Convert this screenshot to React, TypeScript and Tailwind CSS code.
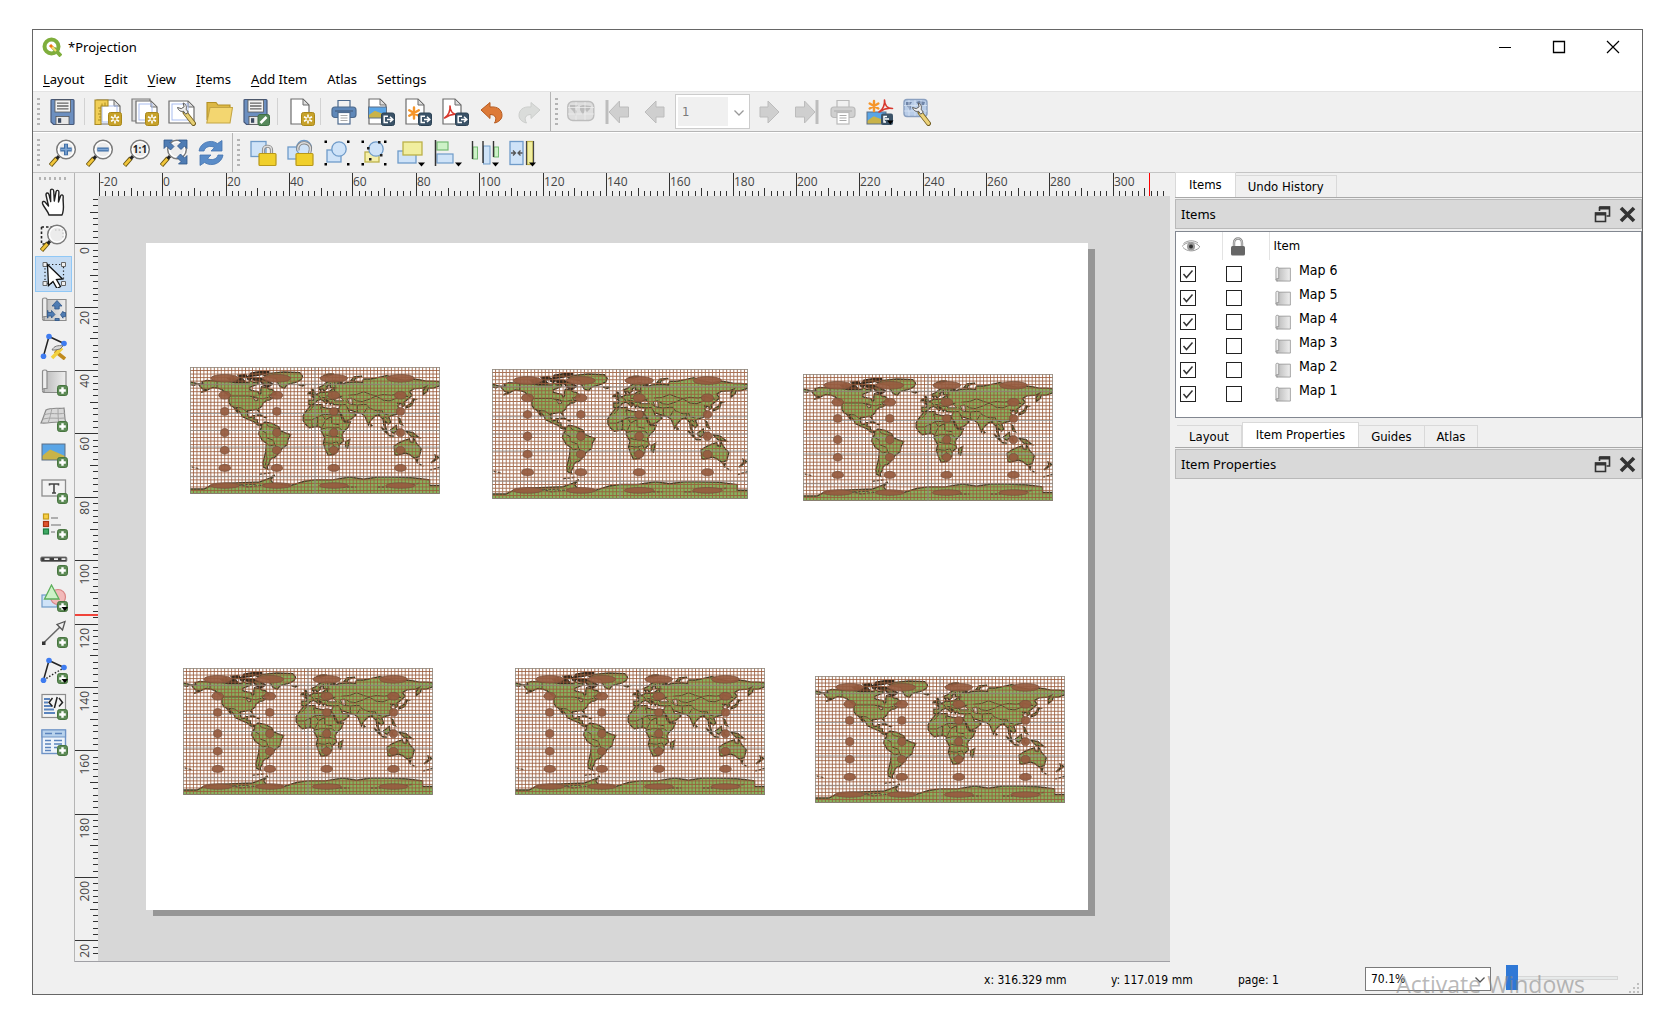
import type { ReactNode } from "react";

/* ---------- shared icon parts ---------- */

function Icon({ children }: { children: ReactNode }) {
  return (
    <svg viewBox="0 0 28 28" className="size-7" fill="none" aria-hidden="true">
      {children}
    </svg>
  );
}

const Page = ({ x = 5, y = 1, w = 18, h = 24 }: { x?: number; y?: number; w?: number; h?: number }) => (
  <>
    <path d={`M${x} ${y}h${w - 6}l6 6v${h - 6}h${-w}z`} fill="#fff" stroke="#6d6d6d" strokeWidth="1.2" />
    <path d={`M${x + w - 6} ${y}v6h6z`} fill="#dcdcdc" stroke="#6d6d6d" strokeWidth="1" />
  </>
);

const GoldBadge = () => (
  <>
    <rect x="14.5" y="14.5" width="13" height="13" rx="2" fill="#c7a22b" stroke="#a98718" />
    <path d="M21 16.5v9M17 18.8l8 4.5M17 23.3l8-4.5" stroke="#fff" strokeWidth="1.6" />
    <circle cx="21" cy="21" r="1.5" fill="#c7a22b" />
  </>
);

const ExportBadge = () => (
  <>
    <rect x="14.5" y="15" width="13" height="12.5" rx="2" fill="#3b5368" stroke="#2c4255" />
    <path d="M21 18.2h-3.8v6.4H21M20 21.4h5.4M23 18.8l2.8 2.6-2.8 2.6" stroke="#fff" strokeWidth="1.5" />
  </>
);

const PlusBadge = ({ menu = false }: { menu?: boolean }) => (
  <>
    <rect x="17.5" y="17.5" width="10" height="10" rx="2.2" fill="#5d8b56" stroke="#47743f" />
    <path d="M22.5 19.2v6.6M19.2 22.5h6.6" stroke="#fff" strokeWidth="2.4" />
    {menu && <path d="M21.5 23h6.5l-3.2 4z" fill="#000" />}
  </>
);

const DropMark = () => <path d="M21 23.5h7l-3.5 4z" fill="#000" />;

const Lens = ({ children }: { children?: ReactNode }) => (
  <>
    <path d="M1.5 26.5 8 19" stroke="#6b5712" strokeWidth="4.4" />
    <path d="M1.8 26 8 19.2" stroke="#f2c63a" strokeWidth="2.6" />
    <path d="m7.5 19.8 2.6-2.8" stroke="#222" strokeWidth="3.2" />
    <circle cx="17" cy="10.5" r="9.3" fill="#ececec" stroke="#7a7a7a" strokeWidth="1.5" />
    <circle cx="17" cy="10.5" r="7.6" stroke="#fff" strokeWidth="1.4" />
    {children}
  </>
);

const Floppy = () => (
  <>
    <path d="M3 1.5h21a1 1 0 0 1 1 1v23a1 1 0 0 1-1 1H4.5L2 24V2.5a1 1 0 0 1 1-1z" fill="#6c8fc0" stroke="#47597a" strokeWidth="1.2" />
    <rect x="6" y="2" width="15.5" height="12" fill="#f3f3f3" stroke="#555" strokeWidth=".8" />
    <path d="M8 5.2h11.5M8 8h11.5M8 10.8h11.5" stroke="#666" strokeWidth="1.3" />
    <rect x="7" y="18.5" width="13" height="8" fill="#e8e8e8" stroke="#555" strokeWidth=".8" />
    <rect x="9" y="20.2" width="3.2" height="4.6" fill="#3c4a60" />
  </>
);

const Wrench = ({ handle }: { handle: string }) => (
  <>
    <path d="m17 14.5 8.5 11" stroke="#6f5a1c" strokeWidth="4.8" strokeLinecap="round" />
    <path d="m17.300 15 8 10.3" stroke={handle} strokeWidth="3.4" strokeLinecap="round" />
    <path d="M9.500 9.500c1 3.500 4 4.500 6 3.700l2.200 3 2.600-2-2.200-3c1-2.600-.2-5.200-3-6.200l1 3.800-2.800 1.800z" fill="#eee" stroke="#5a5a5a" />
  </>
);

const Printer = ({ body, dark }: { body: string; dark: string }) => (
  <>
    <path d="M8 9V2.5h12V9" fill="#f1f1f1" stroke={dark} strokeWidth="1.2" />
    <rect x="2" y="9" width="24" height="10.5" rx="3" fill={body} stroke={dark} strokeWidth="1.2" />
    <path d="M5 13h18" stroke={dark} strokeWidth="1.6" />
    <rect x="8" y="14.5" width="12" height="11.5" fill="#fff" stroke={dark} strokeWidth="1.2" />
    <path d="M10.5 17.5h7M10.5 20h7M10.5 22.5h7" stroke="#aaa" strokeWidth="1.2" />
  </>
);

const Scroll = () => (
  <>
    <path d="M4 3.5h22v21H4z" fill="url(#paper)" stroke="#8c8c8c" strokeWidth="1.2" />
    <path d="M2.5 3.500c0-2 4.500-2 4.500 0V20.500H4.500c-1.5 0-2 1-2 2z" fill="#ededed" stroke="#8c8c8c" strokeWidth="1.2" />
    <path d="M2.5 22.5c0 2 1.5 2 2.5 2" stroke="#8c8c8c" strokeWidth="1.2" />
  </>
);

const Photo = ({ x, y, w, h }: { x: number; y: number; w: number; h: number }) => (
  <>
    <rect x={x} y={y} width={w} height={h} fill="#5aa5e6" />
    <path d={`M${x} ${y + h * 0.75} ${x + w * 0.35} ${y + h * 0.35}l${w * 0.65} ${h * 0.4}v${h * 0.25}H${x}z`} fill="#c9b349" />
    <rect x={x} y={y} width={w} height={h} stroke="#5b6f85" strokeWidth="1" />
  </>
);

const Asterisk = ({ x, y, s }: { x: number; y: number; s: number }) => (
  <path
    d={`M${x} ${y - s}v${s * 2}M${x - s * 0.87} ${y - s * 0.5}l${s * 1.74} ${s}M${x - s * 0.87} ${y + s * 0.5}l${s * 1.74} ${-s}`}
    stroke="#f5952a"
    strokeWidth="2.4"
    strokeLinecap="round"
  />
);

const Pdf = ({ x, y }: { x: number; y: number }) => (
  <path
    d={`M${x} ${y + 12}c4-2 6-8 5.5-12 0 5 3 8.500 8 8.500-5-1-10 1-13.500 3.500z`}
    stroke="#d8382e"
    strokeWidth="1.6"
    strokeLinejoin="round"
  />
);

const WorldTile = () => (
  <>
    <rect x="0.8" y="3.5" width="26" height="19" rx="5" fill="#dedede" stroke="#bdbdbd" strokeWidth="1.4" />
    <path d="M3 7h8l-3 4 2 2-1 5-3-5-3-3zM13 8l3-1 8 1-1 3-3 3-2-2-2 5-3-5z" fill="#bcbcbc" />
    <path d="M1 9.5h26M1 16h26M9 4v18M18 4v18" stroke="#ededed" strokeWidth=".8" />
  </>
);

const Nodes = ({ dashed }: { dashed: boolean }) => (
  <>
    <path d="M9 4.5 3.5 24M9 4.5l15 7" stroke="#222" strokeWidth="1.5" />
    {dashed && <path d="m3.5 24 20-12" stroke="#222" strokeWidth="1.4" strokeDasharray="1.5 1.8" />}
    <circle cx="9" cy="4.5" r="2.8" fill="#3f7cf0" />
    <circle cx="24" cy="11.5" r="2.8" fill="#3f7cf0" />
    <circle cx="3.5" cy="24.2" r="2.8" fill="#3f7cf0" />
  </>
);

const corners = (a: number, b: number) =>
  [
    [a, a],
    [b, a],
    [a, b],
    [b, b],
  ].map(([x, y]) => <rect key={`${x}-${y}`} x={x} y={y} width="2.5" height="2.5" fill="#000" />);

const Padlock = ({ open = false }: { open?: boolean }) => {
  const shackle = open ? "M12 11.500C11 6.500 14.500 3.500 18.500 3.800c4 .3 6.500 3 5.800 7l-.8 4" : "M14.500 15v-4c0-5 8-5 8 0v4";
  return (
    <>
      <path d={shackle} stroke="#858585" strokeWidth="3.2" />
      <path d={shackle} stroke="#dcdcdc" strokeWidth="1.4" />
      <rect x="10" y="14.5" width="17" height="12" rx="1" fill="#f0cf2b" stroke="#b8981a" strokeWidth="1.2" />
    </>
  );
};

const skyFill = "#cfe3f8";
const skyLine = "#6f9bc9";

/* ---------- toolbar icons ---------- */

const icons: Record<string, ReactNode> = {
  save: <Floppy />,
  newLayout: (
    <>
      <Page x={3} y={2} w={23} h={24} />
      <rect x="8" y="8" width="15" height="16" stroke="#a9bdf0" />
      <path d="M1 2h13v6H7v18.500H1z" fill="#f1cf57" stroke="#a98a20" strokeWidth="1.1" />
      <path d="M4 10h3M5 13h2M4 16h3M5 19h2M4 22h3M8 5.5v2.500M11 4.500V8" stroke="#a98a20" />
      <GoldBadge />
    </>
  ),
  duplicate: (
    <>
      <path d="M1 1h18v22H1z" fill="#dedede" stroke="#7b7b7b" strokeWidth="1.2" />
      <Page x={5} y={3} w={21} h={22} />
      <rect x="8" y="6" width="13" height="16" stroke="#a9bdf0" />
      <GoldBadge />
    </>
  ),
  manager: (
    <>
      <Page x={1} y={3} w={25} h={22} />
      <rect x="4" y="6" width="16" height="16" stroke="#a9bdf0" />
      <Wrench handle="#e6cf74" />
    </>
  ),
  open: (
    <>
      <path d="M2 4.500h9l2 2.500h12v4H6L2 22z" fill="#dcb845" stroke="#b39024" strokeWidth="1.1" />
      <path d="M5 9.500H27.500L25 25H1.800z" fill="#f3d670" stroke="#c4a545" strokeWidth="1.1" />
    </>
  ),
  saveAs: (
    <>
      <Floppy />
      <rect x="16" y="16.5" width="11.5" height="11" rx="2" fill="#56895b" stroke="#3f6f45" />
      <path d="m18.500 25 6-6" stroke="#fff" strokeWidth="2.6" />
    </>
  ),
  addPages: (
    <>
      <Page x={4} y={1} w={18} h={25} />
      <GoldBadge />
    </>
  ),
  print: <Printer body="#5f88b9" dark="#4d6a8e" />,
  printGray: <Printer body="#d0d0d0" dark="#bababa" />,
  exportImage: (
    <>
      <Page x={2} y={1} w={17} h={25} />
      <Photo x={1.5} y={9} w={18} h={11} />
      <ExportBadge />
    </>
  ),
  exportSvg: (
    <>
      <Page x={2} y={1} w={18} h={25} />
      <Asterisk x={10} y={15} s={5.5} />
      <ExportBadge />
    </>
  ),
  exportPdf: (
    <>
      <Page x={2} y={1} w={18} h={25} />
      <Pdf x={3.5} y={8} />
      <ExportBadge />
    </>
  ),
  undo: (
    <path d="M3 12 12 4.500v4.500c8-.8 12 3 12 8.500 0 3.500-3 6.500-7.500 7.500 2.500-4 1.500-8.500-4.500-8.500v4z" fill="#dd7a38" stroke="#b55a1f" />
  ),
  redo: (
    <path d="M25 12 16 4.500v4.500C8 8.200 4 12 4 17.500 4 21 7 24 11.500 25 9 21 10 16.500 16 16.500v4z" fill="#dadcda" stroke="#cccecc" />
  ),
  preview: <WorldTile />,
  first: (
    <>
      <rect x="1.5" y="2" width="3" height="24" fill="#bdbdbd" />
      <path d="M5 14 15.500 3v6H24.500v10h-9v6z" fill="#cfcfcf" stroke="#bcbcbc" />
    </>
  ),
  prev: <path d="M4 14 15 3v6h8v10h-8v6z" fill="#cfcfcf" stroke="#bcbcbc" />,
  next: <path d="M24 14 13 3v6H5v10h8v6z" fill="#cfcfcf" stroke="#bcbcbc" />,
  last: (
    <>
      <rect x="23.5" y="2" width="3" height="24" fill="#bdbdbd" />
      <path d="M23 14 12.500 3v6H3.500v10h9v6z" fill="#cfcfcf" stroke="#bcbcbc" />
    </>
  ),
  exportAtlas: (
    <>
      <Photo x={1} y={14} w={19} h={12} />
      <Asterisk x={8} y={8} s={5} />
      <Pdf x={13} y={2} />
      <rect x="15" y="15.5" width="12" height="11.5" rx="2" fill="#3b5368" />
      <path d="M21 18.500h-3v5.500h2M19 21h4" stroke="#fff" strokeWidth="1.5" />
      <path d="M21 22.500h6.500l-3.200 4z" fill="#000" />
    </>
  ),
  atlasSettings: (
    <>
      <rect x="1" y="1.5" width="23" height="17" rx="3" fill="#b9cde8" stroke="#8aa0c0" strokeWidth="1.4" />
      <path d="M3 4h6l-2 3 1 2-1 4-2-4-2-2zM13 4l3-1 6 1-1 3-3 2z" fill="#6f85a8" />
      <path d="M1 7.500h23M1 13h23M6 2v16M12 2v16M18 2v16" stroke="#dde8f6" strokeWidth=".7" />
      <Wrench handle="#ecd27a" />
    </>
  ),
  zoomIn: (
    <Lens>
      <path d="M17 4.800v11.400M11.300 10.500h11.400" stroke="#3f6ea6" strokeWidth="4" />
      <path d="M17 5.500v10M12 10.500h10" stroke="#7ea6d4" strokeWidth="1.6" />
    </Lens>
  ),
  zoomOut: (
    <Lens>
      <path d="M11.300 10.500h11.400" stroke="#3f6ea6" strokeWidth="4" />
      <path d="M12 10.500h10" stroke="#7ea6d4" strokeWidth="1.6" />
    </Lens>
  ),
  zoomActual: (
    <Lens>
      <text x="17" y="14" textAnchor="middle" fontSize="10" fontWeight="700" fill="#222" className="font-['Open_Sans',sans-serif]">
        1:1
      </text>
    </Lens>
  ),
  zoomFull: (
    <>
      <Lens />
      <path d="M4 1h8.500L10 3.500l4 4L10.500 11l-4-4L4 9.500zM27 1h-8.500L21 3.500l-3.500 3.500 3.500 3.500 3.500-3.500L27 9.500zM27 25v-8.500L24.500 19l-4-4-3.500 3.500 4 4-2.500 2.500z" fill="#4f7cb3" stroke="#2f5688" strokeWidth=".8" />
    </>
  ),
  refresh: (
    <>
      <path d="M2 12C3 4 13-.5 20.500 4.500L25 1.500V12H14l3.500-3.500C13 6 8 8 7 12z" fill="#5a8cc8" stroke="#4474b0" strokeWidth=".8" />
      <path d="M26 16c-1 8-11 12.500-18.500 7.500L3 26.500V16h11l-3.500 3.500C15 22 20 20 21 16z" fill="#5a8cc8" stroke="#4474b0" strokeWidth=".8" />
    </>
  ),
  lock: (
    <>
      <rect x="2" y="2.5" width="15" height="15" fill={skyFill} stroke={skyLine} strokeWidth="1.3" />
      <Padlock />
    </>
  ),
  unlock: (
    <>
      <rect x="2" y="8" width="14" height="12" fill={skyFill} stroke={skyLine} strokeWidth="1.3" />
      <circle cx="18" cy="9" r="7.5" fill={skyFill} stroke={skyLine} strokeWidth="1.3" />
      <Padlock open />
    </>
  ),
  group: (
    <>
      <rect x="4" y="11" width="14" height="12" fill={skyFill} stroke={skyLine} strokeWidth="1.3" />
      <circle cx="16" cy="10" r="7.2" fill={skyFill} stroke={skyLine} strokeWidth="1.3" />
      {corners(1.5, 24)}
    </>
  ),
  ungroup: (
    <>
      <rect x="5" y="13" width="14" height="10" fill="#f5efaa" stroke="#bcb149" strokeWidth="1.3" />
      <circle cx="16" cy="10" r="7.2" fill={skyFill} stroke={skyLine} strokeWidth="1.3" />
      {corners(1.5, 24)}
      <path d="M7 8h2.500v2.500H7zM20 15h2.500v2.500H20zM9 19h2.500v2.500H9zM18 2h2.500v2.500H18z" fill="#222" />
    </>
  ),
  raise: (
    <>
      <rect x="1" y="12" width="18" height="12" fill={skyFill} stroke={skyLine} strokeWidth="1.3" />
      <rect x="6" y="3" width="19" height="13" fill="#f1ee9f" stroke="#bcb149" strokeWidth="1.3" />
      <DropMark />
    </>
  ),
  align: (
    <>
      <rect x="3" y="3" width="11" height="8" fill="#cdf2c7" stroke="#74b972" strokeWidth="1.2" />
      <rect x="3" y="15" width="16" height="9" fill={skyFill} stroke={skyLine} strokeWidth="1.2" />
      <path d="M1.500 1v26" stroke="#333" strokeWidth="1.5" />
      <DropMark />
    </>
  ),
  distribute: (
    <>
      <rect x="2" y="8" width="4.5" height="12" fill="#cdf2c7" stroke="#74b972" />
      <rect x="12.5" y="7" width="6.5" height="18" fill={skyFill} stroke={skyLine} />
      <rect x="23" y="8" width="4.5" height="10" fill="#cdf2c7" stroke="#74b972" />
      <path d="M1.500 2v18M12 2v22M22.500 2v16" stroke="#333" strokeWidth="1.4" />
      <DropMark />
    </>
  ),
  resize: (
    <>
      <rect x="2" y="2.5" width="13" height="23" fill={skyFill} stroke={skyLine} strokeWidth="1.3" />
      <rect x="19" y="2.5" width="6" height="23" fill="#f1ee9f" stroke="#bcb149" strokeWidth="1.2" />
      <path d="M3 14h4M5 11.500 7.500 14 5 16.500M14.500 14h-4M12.500 11.500 10 14l2.500 2.500" stroke="#555" strokeWidth="1.3" />
      <path d="M18.500 2v24M25.500 2v24" stroke="#444" strokeWidth="1.2" />
      <DropMark />
    </>
  ),
  pan: (
    <path
      d="M9 27C8 23 3.500 19 2.500 15.500c-.5-2 1.500-3 3-1l3 3.500L6 7c-.4-2.500 2.400-2.800 3-.3l1.700 6.800L10.500 3c0-2.500 3-2.500 3.200 0l.6 10L16 4c.4-2.300 3-2 2.900.3L18.500 14l2-6c.7-1.900 2.900-1.300 2.700.8C22.500 15 25 20 22 27z"
      fill="#fff"
      stroke="#222"
      strokeWidth="1.4"
      strokeLinejoin="round"
    />
  ),
  zoomTool: (
    <>
      <path d="M1.500 3h14M1.500 3v17h8" stroke="#222" strokeWidth="1.6" strokeDasharray="2.500 2" />
      <Lens>
        <path d="M15 6h8v9" stroke="#bbb" strokeDasharray="1.500 2" />
      </Lens>
    </>
  ),
  select: (
    <>
      <path d="M5 4.500h18.500v19H5z" stroke="#222" strokeWidth="1.2" strokeDasharray="1.300 2.200" />
      <path d="M3 2.500h4v4H3zM21.500 2.500h4v4h-4zM3 21.500h4v4H3zM21.500 21.500h4v4h-4z" fill="#eee" stroke="#666" />
      <path d="m7.500 4.500 15 14.500-6 .5 4 7-3.500 2-4-7-4.500 4z" fill="#fff" stroke="#111" strokeWidth="1.3" />
    </>
  ),
  moveContent: (
    <>
      <Scroll />
      <g fill="#4f7cb3" stroke="#2f5688" strokeWidth=".8">
        <path d="M17 4.500 22 10h-2.800v3h-4.400v-3H12z" />
        <path d="M8 14.500v2h3.500v-2l3.500 4-3.500 3.500v-2H8v2h-.5v-7.500z" />
        <path d="M15 22.500h4.200v2H15zM25.500 16.500v4.200h-2.500v1.500l-2.500-3.500 2.500-3.500v1.300z" />
      </g>
    </>
  ),
  editNodes: (
    <>
      <Nodes dashed={false} />
      <path d="m15 19 10 8" stroke="#c08a1e" strokeWidth="3.6" />
      <path d="m22 16-10 10" stroke="#f2d13f" strokeWidth="3.6" />
      <path d="M12 18c2-4 6-5 11-4l-3 3-5 1z" fill="#d8d8d8" stroke="#777" />
    </>
  ),
  addMap: (
    <>
      <Scroll />
      <PlusBadge />
    </>
  ),
  add3d: (
    <>
      <path d="M6 6c5-3 14-1 18-2 1 5 0 10 2 15-8-3-17 1-25 0C3 15 4 11 6 6z" fill="#d8d8d8" stroke="#8a8a8a" strokeWidth="1.2" />
      <path d="M4 11c7-3 14 0 21-2M3 15c7-2 15 0 22-1M12 4c-1 5-2 10-4 15M18 4c0 5 0 9 .5 14" stroke="#a5a5a5" />
      <PlusBadge />
    </>
  ),
  addImage: (
    <>
      <Photo x={2} y={4} w={23} h={16} />
      <PlusBadge />
    </>
  ),
  addLabel: (
    <>
      <rect x="2" y="4" width="23.5" height="16" fill="#f2f2f2" stroke="#8c8c8c" strokeWidth="1.3" />
      <path d="M9.500 9.500V8h9v1.500M14 8v9M12 17h4" stroke="#444" strokeWidth="1.6" />
      <PlusBadge />
    </>
  ),
  addLegend: (
    <>
      <rect x="3.5" y="2" width="5" height="5" fill="#f7cf46" stroke="#c59c19" strokeWidth="1.2" />
      <rect x="3.5" y="9.5" width="5" height="5" fill="#e0542f" stroke="#a93210" strokeWidth="1.2" />
      <rect x="3.5" y="17" width="5" height="5" fill="#3faa64" stroke="#1f7a40" strokeWidth="1.2" />
      <path d="M11 6h7M11 13h10M11 20h4" stroke="#999" strokeWidth="1.6" />
      <PlusBadge />
    </>
  ),
  addScale: (
    <>
      <rect x=".8" y="9" width="26" height="4.5" rx="1" fill="#3e3e3e" stroke="#777" />
      <path d="M4.500 11.200h5M14 11.200h4M21.500 11.200h4" stroke="#eee" strokeWidth="1.7" />
      <PlusBadge />
    </>
  ),
  addShape: (
    <>
      <rect x="2" y="11" width="15" height="12" fill={skyFill} stroke={skyLine} strokeWidth="1.2" />
      <circle cx="18" cy="13" r="7.5" fill="#f2b9b9" stroke="#d98484" strokeWidth="1.2" />
      <path d="M11.500 1 19 15H4.500z" fill="#cdf2c7" stroke="#5cae5b" strokeWidth="1.3" />
      <PlusBadge menu />
    </>
  ),
  addArrow: (
    <>
      <path d="M3.500 23 20 7" stroke="#666" strokeWidth="1.5" />
      <path d="m25 1.500-2.500 8.500-5.500-5.500z" fill="#eee" stroke="#555" strokeWidth="1.3" />
      <path d="M2 21.500h3.500V25H2z" fill="#333" />
      <PlusBadge />
    </>
  ),
  addNode: (
    <>
      <Nodes dashed />
      <PlusBadge menu />
    </>
  ),
  addHtml: (
    <>
      <rect x="2" y="2.5" width="23.5" height="23" fill="#f4f4f4" stroke="#8c8c8c" strokeWidth="1.2" />
      <path d="M4 7h6M4 10.500h4M4 14h8M4 17.500h10M4 21h11" stroke="#5b84bd" strokeWidth="1.9" />
      <path d="m12.500 6-3.500 4.500 3.500 4M19 6l3.500 4.500-3.500 4M17.200 5l-2.800 11" stroke="#222" strokeWidth="1.5" />
      <PlusBadge />
    </>
  ),
  addTable: (
    <>
      <rect x="2" y="2" width="23.5" height="23.5" fill="#eef4fb" stroke="#6e93c6" strokeWidth="1.4" />
      <path d="M2 2h23.500v7H2z" fill="#b8d2ec" stroke="#6e93c6" strokeWidth="1.2" />
      <path d="M5 5.500h7M15 5.500h7M5 12.500h6M14 12.500h8M5 16h6M14 16h8M5 19.500h6M14 19.500h3M5 22.500h6" stroke="#5b84bd" strokeWidth="1.4" />
      <PlusBadge />
    </>
  ),
};

/* ---------- toolbars ---------- */

function ToolButton({ name, label, disabled = false }: { name: string; label: string; disabled?: boolean }) {
  return (
    <button type="button" aria-label={label} disabled={disabled} className="flex w-[37px] shrink-0 items-center justify-center self-stretch">
      <Icon>{icons[name]}</Icon>
    </button>
  );
}

const Grip = () => (
  <span className="flex w-[11px] shrink-0 justify-center self-stretch py-1.5">
    <span className="w-[3px] bg-[repeating-linear-gradient(to_bottom,#b4b4b4_0_2px,transparent_2px_5px)]" />
  </span>
);

const Separator = () => <span className="my-1.5 mr-1 ml-[3px] w-px shrink-0 self-stretch bg-[#d2d2d2]" />;

const BarEnd = () => <span className="ml-[3px] w-px shrink-0 self-stretch bg-[#b5b5b5]" />;

const Tools = ({ list, disabled = false }: { list: [string, string][]; disabled?: boolean }) => (
  <>
    {list.map(([name, label]) => (
      <ToolButton key={name} name={name} label={label} disabled={disabled} />
    ))}
  </>
);

const Chevron = ({ className }: { className: string }) => (
  <svg viewBox="0 0 12 8" className={className} fill="none" aria-hidden="true">
    <path d="m1.500 1.500 4.500 4.500 4.500-4.500" stroke="currentColor" strokeWidth="1.3" />
  </svg>
);

const sideTools: [string, string][] = [
  ["pan", "Pan Layout"],
  ["zoomTool", "Zoom"],
  ["select", "Select/Move Item"],
  ["moveContent", "Move Item Content"],
  ["editNodes", "Edit Nodes Item"],
  ["addMap", "Add Map"],
  ["add3d", "Add 3D Map"],
  ["addImage", "Add Picture"],
  ["addLabel", "Add Label"],
  ["addLegend", "Add Legend"],
  ["addScale", "Add Scale Bar"],
  ["addShape", "Add Shape"],
  ["addArrow", "Add Arrow"],
  ["addNode", "Add Node Item"],
  ["addHtml", "Add HTML"],
  ["addTable", "Add Attribute Table"],
];

/* ---------- rulers ---------- */

const MM = 3.168;
const tickLength = (u: number, full: number) => (u % 20 === 0 ? full : u % 10 === 0 ? 8 : 5);
const range = (from: number, to: number) => Array.from({ length: (to - from) / 2 + 1 }, (_, i) => from + i * 2);

function HorizontalRuler() {
  return (
    <svg className="h-[23px] min-w-0 flex-1 font-['Open_Sans',sans-serif]" shapeRendering="crispEdges" aria-label="Horizontal ruler">
      {range(-20, 316).map((u) => {
        const x = Math.round(64.4 + u * MM);
        const len = tickLength(u, 23);
        return (
          <g key={u}>
            <rect x={x} y={23 - len} width="1" height={len} fill="#333" />
            {u % 20 === 0 && (
              <text x={x + 1} y="13" fontSize="12" fill="#444">
                {u}
              </text>
            )}
          </g>
        );
      })}
      <rect x="1051" y="0" width="1" height="23" fill="#f00" />
    </svg>
  );
}

function VerticalRuler() {
  return (
    <svg className="w-[23px] shrink-0 font-['Open_Sans',sans-serif]" shapeRendering="crispEdges" aria-label="Vertical ruler">
      {range(-14, 224).map((u) => {
        const y = Math.round(47.4 + u * MM);
        const len = tickLength(u, 23);
        return (
          <g key={u}>
            <rect x={23 - len} y={y} width={len} height="1" fill="#333" />
            {u % 20 === 0 && (
              <text transform={`translate(14 ${y + 4}) rotate(-90)`} textAnchor="end" fontSize="12" fill="#444">
                {u > 200 ? u - 200 : u}
              </text>
            )}
          </g>
        );
      })}
      <rect x="0" y="418" width="23" height="2" fill="#f0433a" />
    </svg>
  );
}

/* ---------- world map with Tissot indicatrices ---------- */

const land: string[] = [
  "-168 66 -161 66 -163 69 -156 71 -141 70 -128 70 -115 68 -108 68 -95 68 -94 71 -88 68 -82 69 -82 66 -87 64 -94 61 -94 58 -88 56 -82 55 -80 51 -78 53 -78 58 -77 62 -70 61 -65 58 -62 58 -56 53 -57 51 -66 50 -64 46 -61 46 -66 43 -70 43 -71 41 -75 39 -76 35 -81 31 -80 26 -82 28 -84 30 -90 29 -97 28 -97 22 -95 18 -91 19 -90 21 -87 21 -88 16 -83 15 -83 11 -79 9 -77 8 -79 7 -83 8 -87 12 -92 14 -97 16 -105 20 -106 23 -109 27 -113 31 -114 31 -110 24 -112 26 -117 33 -121 35 -124 40 -124 47 -123 49 -130 54 -134 58 -140 60 -147 61 -152 59 -158 56 -164 54 -158 58 -162 59 -165 62",
  "-73 78 -65 81 -45 83 -22 82 -18 77 -20 72 -26 69 -40 65 -44 60 -50 62 -54 68 -56 74 -68 76",
  "-77 8 -72 12 -62 10 -52 5 -50 0 -44 -3 -35 -6 -39 -13 -40 -20 -48 -26 -54 -34 -58 -38 -62 -39 -65 -42 -66 -47 -69 -51 -68 -55 -74 -52 -75 -46 -73 -38 -71 -30 -70 -18 -76 -14 -81 -5 -80 0 -77 4",
  "-6 36 10 37 11 33 20 31 32 31 34 28 37 22 39 16 43 12 51 12 48 5 41 -2 39 -6 41 -15 35 -20 35 -25 32 -29 27 -34 19 -35 15 -27 12 -18 14 -10 9 -1 9 4 4 6 -8 4 -13 8 -17 14 -17 21 -13 27 -9 32",
  "-9 43 -9 37 -5 36 0 39 3 42 8 44 12 42 16 38 18 40 13 45 19 42 22 37 24 40 27 37 36 36 35 32 33 29 39 21 43 13 52 16 59 22 56 25 50 25 48 30 56 27 62 25 67 24 72 20 77 8 80 14 87 21 92 22 98 16 99 8 103 1 101 7 101 13 106 9 109 12 106 19 110 21 117 23 122 30 119 35 122 38 118 39 125 38 126 34 129 36 128 40 132 43 140 50 136 55 142 59 155 60 160 62 156 57 156 51 162 56 163 60 170 60 179 63 180 69 170 70 160 70 150 72 140 73 130 71 113 74 104 78 90 75 80 73 70 73 68 68 60 69 45 68 40 66 32 67 40 68 28 71 18 69 10 63 5 61 7 58 11 59 13 56 18 60 17 62 22 66 22 61 29 60 24 58 20 55 10 54 8 57 8 54 2 51 -4 48 -1 46 -2 43",
  "-180 69 -172 67 -170 66 -174 64 -180 65",
  "114 -22 122 -17 129 -14 136 -12 137 -16 141 -17 142 -11 146 -18 153 -26 150 -37 143 -39 136 -34 130 -32 118 -35 115 -34",
  "145 -41 148 -41 147 -44",
  "173 -35 178 -38 175 -41 173 -40 167 -46 171 -44 174 -41",
  "44 -16 50 -13 47 -25 44 -23",
  "-5 50 1 52 -3 58 -5 58 -3 54",
  "-10 52 -6 52 -6 55 -9 54",
  "-24 65 -14 65 -18 63",
  "131 32 136 34 140 36 142 43 145 44 141 45 139 39 131 34",
  "95 5 104 -2 106 -6 100 -1",
  "109 1 117 7 118 1 114 -4 110 -2",
  "106 -7 114 -8 108 -8",
  "119 1 124 1 121 -2 123 -5 120 -4",
  "131 -1 141 -3 150 -10 143 -9 138 -8",
  "120 18 122 17 126 8 122 10",
  "80 9 82 7 80 6",
  "-84 22 -75 20 -78 22",
  "-74 19 -69 19 -71 18",
  "52 71 56 76 68 77 58 74 57 71",
  "12 78 20 80 27 80 18 77",
  "-180 -83 -160 -83 -150 -78 -130 -75 -105 -74 -80 -73 -66 -68 -58 -63 -64 -70 -60 -75 -35 -78 -15 -72 0 -70 25 -70 50 -66 70 -69 90 -66 110 -66 140 -67 165 -70 165 -78 180 -78 180 -90 -180 -90",
];

const arcticIslands: string[] = [
  "-118 72 -105 73 -102 70 -115 69",
  "-125 74 -118 76 -115 73 -122 71",
  "-90 74 -80 74 -68 70 -62 66 -68 62 -74 65 -78 70 -88 72",
  "-95 77 -80 79 -66 83 -80 83 -92 81",
  "-110 78 -100 79 -98 76 -108 75",
  "-98 74 -92 74 -94 72",
];

const borders: string[] = [
  "-141 70 -141 60",
  "-123 49 -95 49 -84 46 -75 45 -67 47",
  "-117 33 -106 32 -97 26",
  "-70 -18 -65 -22 -58 -20 -54 -26 -57 -30",
  "-78 1 -70 -4 -70 -10 -60 -14 -58 -20",
  "-72 12 -67 6 -60 4 -52 3",
  "-71 -30 -69 -40 -72 -50",
  "-17 15 -5 15 4 19 12 23 25 22 37 22",
  "9 33 10 23 15 15 24 20 24 10 35 8",
  "-5 15 -4 5M4 19 3 6M14 13 10 4M15 15 24 20",
  "9 2 18 4 28 4 35 4 41 -2",
  "14 -6 22 -8 30 -8 39 -11",
  "12 -17 24 -18 32 -16 35 -22M20 -28 20 -18M30 4 30 -8M25 -18 30 -26",
  "25 31 25 22M-2 35 -8 28M10 37 8 31M34 28 30 22",
  "28 71 29 62 28 56 24 54 24 48 30 46 40 49",
  "2 51 7 48 8 44M15 54 15 49 22 49M10 47 17 46 22 44 28 44",
  "48 50 60 51 70 55 80 51 88 49 98 51 110 50 120 52 128 49 134 48",
  "36 36 44 37 48 30M44 42 48 39M53 37 61 36 61 30 62 25",
  "61 36 70 37 74 37 78 32 88 28 97 28 98 24 106 22",
  "70 24 75 32M92 22 94 27M98 16 100 20 105 16M88 49 98 43 108 42 118 46 120 52",
  "55 45 60 42 68 41 74 43 80 45 88 49M141 -3 141 -9",
];

const inlandSeas: string[] = ["28 42 30 46 37 47 41 42 35 42", "47 45 53 46 54 37 49 38", "-90 48 -84 47 -82 43 -86 42"];

const toPath = (pts: string) =>
  pts
    .split("M")
    .map((part) => {
      const n = part.trim().split(/\s+/).map(Number);
      let d = "";
      for (let i = 0; i < n.length; i += 2) d += `${i ? "L" : "M"}${n[i]} ${-n[i + 1]}`;
      return d;
    })
    .join("");

const landPath = land.map((p) => toPath(p) + "z").join("");
const arcticPath = arcticIslands.map((p) => toPath(p) + "z").join("");
const seaPath = inlandSeas.map((p) => toPath(p) + "z").join("");
const borderPath = borders.map(toPath).join("");
const gridPath =
  Array.from({ length: 73 }, (_, i) => `M${-180 + i * 5} -90v180`).join("") +
  Array.from({ length: 37 }, (_, i) => `M-180 ${-90 + i * 5}h360`).join("");
const circleLons = [-130, -55, 27, 123];
const circleRows = [
  [74, 20, 5.5],
  [50, 8.5, 5.5],
  [27, 6, 5.5],
  [-3, 6, 6],
  [-28, 6.5, 5.5],
  [-53, 8.5, 5],
  [-78, 21, 4],
];

function WorldMap() {
  return (
    <svg viewBox="-180 -90 360 180" preserveAspectRatio="none" className="size-full bg-white" aria-hidden="true">
      <path d={landPath} fill="#86b35f" stroke="#3f3d29" strokeWidth="2" />
      <path d={arcticPath} fill="#6b7346" stroke="#332a20" strokeWidth="3" />
      <path d={seaPath} fill="#f4f1ee" stroke="#3f3d29" strokeWidth="1.4" />
      <path d={borderPath} fill="none" stroke="#43422a" strokeWidth="1.4" />
      <path d="M-168 54-180 51M180 52 166 56M-85 76-110 77-96 80-72 77M-64 60-80 62M145 44 156 51M40 80 60 80M90 80 105 80M140 76 150 75" fill="none" stroke="#4f4a3e" strokeWidth="2" strokeDasharray="4 2" />
      <path d={gridPath} fill="none" stroke="#9a5b3a" strokeWidth="1.4" opacity=".85" />
      <path d="M-180-65.500h360M-180-24h360M-180 0h360M-180 23.500h360M-180 65.500h360M0-90v180" fill="none" stroke="#8f9496" strokeWidth="1.500" opacity=".7" />
      <g fill="#965b40" stroke="#75503c" strokeWidth="1" fillOpacity=".93">
        {circleRows.flatMap(([lat, rx, ry]) => circleLons.map((lon) => <ellipse key={`${lat}${lon}`} cx={lon} cy={-lat} rx={rx} ry={ry} />))}
      </g>
      <rect x="-179.5" y="-89.5" width="359" height="179" fill="none" stroke="#8f8f88" strokeWidth="1" />
    </svg>
  );
}

/* Placement of each map frame on the page canvas. */
const frames = [
  { id: 1, place: "left-[44px] top-[124px] h-[127px] w-[250px]" },
  { id: 2, place: "left-[346px] top-[126px] h-[130px] w-[256px]" },
  { id: 3, place: "left-[657px] top-[131px] h-[127px] w-[250px]" },
  { id: 4, place: "left-[37px] top-[425px] h-[127px] w-[250px]" },
  { id: 5, place: "left-[369px] top-[425px] h-[127px] w-[250px]" },
  { id: 6, place: "left-[669px] top-[433px] h-[127px] w-[250px]" },
];

/* ---------- side panels ---------- */

function Tab({ label, active = false }: { label: string; active?: boolean }) {
  return (
    <button
      type="button"
      role="tab"
      aria-selected={active}
      className={
        active
          ? "h-[25px] shrink-0 border border-b-0 border-[#d9d9d9] bg-white px-[13px] leading-[24px]"
          : "h-[22px] shrink-0 border border-b-0 border-l-0 border-[#d9d9d9] bg-[#f0f0f0] px-3 leading-[22px]"
      }
    >
      {label}
    </button>
  );
}

function DockHeader({ title }: { title: string }) {
  return (
    <div className="mt-px flex h-[30px] shrink-0 items-center justify-between border border-[#b9b9b9] bg-[#d9d9d9] pr-[5px] pl-[5px] font-['Noto_Sans',sans-serif]">
      <h2 className="pt-0.5">{title}</h2>
      <div className="flex gap-2">
        <button type="button" aria-label={`Float ${title}`}>
          <svg viewBox="0 0 17 17" className="size-[17px]" fill="none" aria-hidden="true">
            <path d="M5.500 1h10v9h-3M5.500 1v4" stroke="#333" strokeWidth="1.6" />
            <path d="M5 2h11" stroke="#333" strokeWidth="3" />
            <path d="M1.500 7h10v8.500h-10z" stroke="#333" strokeWidth="1.6" />
            <path d="M1 8h11" stroke="#333" strokeWidth="3" />
          </svg>
        </button>
        <button type="button" aria-label={`Close ${title}`}>
          <svg viewBox="0 0 17 17" className="size-[17px]" aria-hidden="true">
            <path d="m2 2 13 13M15 2 2 15" stroke="#333" strokeWidth="3.6" />
          </svg>
        </button>
      </div>
    </div>
  );
}

function CheckBox({ label, checked }: { label: string; checked: boolean }) {
  return (
    <span className="relative ml-1 block size-4">
      <input type="checkbox" aria-label={label} defaultChecked={checked} className="peer block size-4 appearance-none border border-[#222] bg-white" />
      <svg viewBox="0 0 16 16" className="pointer-events-none absolute inset-0 hidden size-4 peer-checked:block" fill="none" aria-hidden="true">
        <path d="m3.500 8 3 3.500 6-7" stroke="#333" strokeWidth="1.5" />
      </svg>
    </span>
  );
}

const menus: [string, string][] = [
  ["L", "ayout"],
  ["E", "dit"],
  ["V", "iew"],
  ["I", "tems"],
  ["A", "dd Item"],
  ["", "Atlas"],
  ["", "Settings"],
];

export default function App() {
  return (
    <div className="flex h-screen bg-white pt-[29px] pr-[25px] pb-[41px] pl-8 font-['DejaVu_Sans_Condensed','DejaVu_Sans',sans-serif] text-[13px] text-black">
      <svg className="absolute size-0" aria-hidden="true">
        <linearGradient id="paper">
          <stop offset="0.2" stopColor="#c4c4c4" />
          <stop offset="1" stopColor="#efefef" />
        </linearGradient>
      </svg>
      <div className="relative flex min-w-0 flex-1 flex-col border border-[#666] bg-[#f0f0f0]">
        {/* Title bar */}
        <header className="flex h-[34px] shrink-0 items-center bg-white pl-[9px] font-['Noto_Sans',sans-serif]">
          <svg viewBox="0 0 20 20" className="size-5" fill="none" aria-hidden="true">
            <circle cx="9.5" cy="9.5" r="7" stroke="#7fae3c" strokeWidth="4" />
            <path d="m11.500 11 7.500 8" stroke="#7fae3c" strokeWidth="4" />
            <path d="m8 8 3 3" stroke="#ee7913" strokeWidth="3" />
            <path d="m10 10 4 4" stroke="#f6dc6c" strokeWidth="2" />
          </svg>
          <h1 className="ml-1.5 flex-1 pt-0.5">*Projection</h1>
          <div className="flex self-stretch pr-0.5">
            <button type="button" aria-label="Minimize" className="flex w-[54px] items-center justify-center">
              <svg viewBox="0 0 14 14" className="size-3.5" aria-hidden="true">
                <path d="M1 7.500h12" stroke="#000" />
              </svg>
            </button>
            <button type="button" aria-label="Maximize" className="flex w-[54px] items-center justify-center">
              <svg viewBox="0 0 14 14" className="size-3.5" fill="none" aria-hidden="true">
                <path d="M1.500 1.500h11v11h-11z" stroke="#000" strokeWidth="1.3" />
              </svg>
            </button>
            <button type="button" aria-label="Close" className="flex w-[54px] items-center justify-center">
              <svg viewBox="0 0 14 14" className="size-3.5" aria-hidden="true">
                <path d="m1 1 12 12M13 1 1 13" stroke="#000" strokeWidth="1.2" />
              </svg>
            </button>
          </div>
        </header>

        {/* Menu bar */}
        <nav className="flex h-[27px] shrink-0 items-center gap-5 bg-white pt-1 pl-2.5 font-['Noto_Sans',sans-serif]">
          {menus.map(([key, rest]) => (
            <button key={rest} type="button">
              {key && <span className="underline underline-offset-2">{key}</span>}
              {rest}
            </button>
          ))}
        </nav>

        {/* Layout and atlas toolbars */}
        <div className="flex h-[41px] shrink-0 items-center border-t border-b border-t-[#e3e3e3] border-b-[#b5b5b5]">
          <Grip />
          <Tools list={[["save", "Save Project"]]} />
          <Separator />
          <Tools
            list={[
              ["newLayout", "New Layout"],
              ["duplicate", "Duplicate Layout"],
              ["manager", "Layout Manager"],
              ["open", "Add Items from Template"],
              ["saveAs", "Save as Template"],
            ]}
          />
          <Separator />
          <Tools list={[["addPages", "Add Pages"]]} />
          <span className="my-1.5 mr-1 ml-px w-px shrink-0 self-stretch bg-[#d2d2d2]" />
          <Tools
            list={[
              ["print", "Print Layout"],
              ["exportImage", "Export as Image"],
              ["exportSvg", "Export as SVG"],
              ["exportPdf", "Export as PDF"],
              ["undo", "Undo"],
            ]}
          />
          <Tools list={[["redo", "Redo"]]} disabled />
          <BarEnd />
          <Grip />
          <Tools
            disabled
            list={[
              ["preview", "Preview Atlas"],
              ["first", "First Feature"],
              ["prev", "Previous Feature"],
            ]}
          />
          <div className="relative ml-0.5 h-[35px] w-[75px] shrink-0 border border-[#ccc] bg-white p-0.5">
            <select aria-label="Atlas page" disabled className="h-full w-[50px] appearance-none bg-[#f0f0f0] pl-1 text-[#7a7a7a] opacity-100">
              <option>1</option>
            </select>
            <Chevron className="pointer-events-none absolute top-3.5 right-1 h-2 w-3 text-[#999]" />
          </div>
          <Tools
            disabled
            list={[
              ["next", "Next Feature"],
              ["last", "Last Feature"],
              ["printGray", "Print Atlas"],
            ]}
          />
          <Tools
            list={[
              ["exportAtlas", "Export Atlas"],
              ["atlasSettings", "Atlas Settings"],
            ]}
          />
        </div>

        {/* Navigation and actions toolbars */}
        <div className="flex h-[41px] shrink-0 items-center border-t border-b border-t-white border-b-[#c4c4c4]">
          <Grip />
          <Tools
            list={[
              ["zoomIn", "Zoom In"],
              ["zoomOut", "Zoom Out"],
              ["zoomActual", "Zoom to 100%"],
              ["zoomFull", "Zoom Full"],
              ["refresh", "Refresh View"],
            ]}
          />
          <BarEnd />
          <Grip />
          <Tools
            list={[
              ["lock", "Lock Selected Items"],
              ["unlock", "Unlock All Items"],
              ["group", "Group Items"],
              ["ungroup", "Ungroup Items"],
              ["raise", "Raise Selected Items"],
              ["align", "Align Selected Items"],
              ["distribute", "Distribute Items"],
              ["resize", "Resize Items"],
            ]}
          />
        </div>

        <main className="flex min-h-0 flex-1">
          {/* Toolbox */}
          <div className="flex w-[42px] shrink-0 flex-col items-center overflow-hidden border-r border-[#b5b5b5]">
            <span className="mt-1 mb-1 h-[3px] w-[30px] shrink-0 bg-[repeating-linear-gradient(to_right,#b4b4b4_0_2px,transparent_2px_5px)]" />
            {sideTools.map(([name, label]) => (
              <button
                key={name}
                type="button"
                aria-label={label}
                aria-pressed={name === "select"}
                className="flex h-9 w-[37px] shrink-0 items-center justify-center border border-transparent aria-pressed:border-[#90c8f6] aria-pressed:bg-[#c6dcf3]"
              >
                <Icon>{icons[name]}</Icon>
              </button>
            ))}
          </div>

          {/* Layout view */}
          <div className="flex min-w-0 flex-1 flex-col border-b border-[#a0a0a5]">
            <div className="flex shrink-0">
              <span className="w-[23px] shrink-0" />
              <HorizontalRuler />
            </div>
            <div className="flex min-h-0 flex-1">
              <VerticalRuler />
              <div className="min-w-0 flex-1 overflow-hidden bg-[#d7d7d7]">
                <div className="relative mt-[47px] ml-12 h-[667px] w-[942px] bg-white shadow-[7px_6px_0_#969696]">
                  {frames.map(({ id, place }) => (
                    <div key={id} role="img" aria-label={`Map ${id}`} className={`absolute ${place}`}>
                      <WorldMap />
                    </div>
                  ))}
                </div>
              </div>
            </div>
          </div>

          {/* Dock panels */}
          <aside className="ml-[5px] flex w-[467px] shrink-0 flex-col">
            <div role="tablist" className="flex h-[25px] shrink-0 items-end border-b border-[#a9a9a9]">
              <Tab label="Items" active />
              <Tab label="Undo History" />
            </div>
            <DockHeader title="Items" />
            <div className="mt-0.5 h-[187px] shrink-0 border border-[#828790] bg-white">
              <table className="w-full table-fixed text-left text-[14px]">
                <thead>
                  <tr className="h-7">
                    <th className="w-[46px] border-r border-[#e3e3e3]">
                      <svg viewBox="0 0 20 14" className="ml-[5px] h-3.5 w-5" fill="none" aria-label="Visible">
                        <path d="M1 7.500C5 2.500 14 1.500 19 8M2 8.500c4 4 11 5 16.500 0M2.500 4.500C7 1 13 1 17 4" stroke="#9b9b9b" />
                        <circle cx="10" cy="7.5" r="4" fill="#999" />
                        <circle cx="10" cy="7.5" r="2" fill="#333" />
                      </svg>
                    </th>
                    <th className="w-[47px] border-r border-[#e3e3e3]">
                      <svg viewBox="0 0 16 19" className="ml-[7px] h-[19px] w-4" fill="none" aria-label="Locked">
                        <path d="M4 10V6c0-6 8-6 8 0v4" stroke="#888" strokeWidth="2.4" />
                        <path d="M4 10V6c0-6 8-6 8 0v4" stroke="#ddd" strokeWidth=".8" />
                        <rect x="1" y="9" width="14" height="9.5" rx="1.5" fill="#666" />
                      </svg>
                    </th>
                    <th className="pl-1 text-[13px] font-normal">Item</th>
                  </tr>
                </thead>
                <tbody>
                  {[6, 5, 4, 3, 2, 1].map((n) => (
                    <tr key={n} className="h-6">
                      <td className="pt-1">
                        <CheckBox label={`Show Map ${n}`} checked />
                      </td>
                      <td className="pt-1">
                        <CheckBox label={`Lock Map ${n}`} checked={false} />
                      </td>
                      <td>
                        <div className="flex items-center gap-[7px] pl-[5px]">
                          <svg viewBox="0 0 28 26" className="mt-1 h-4 w-[18px]" fill="none" aria-hidden="true">
                            <Scroll />
                          </svg>
                          <span className="pb-1 leading-4">Map {n}</span>
                        </div>
                      </td>
                    </tr>
                  ))}
                </tbody>
              </table>
            </div>
            <div role="tablist" className="mt-[5px] flex h-[25px] shrink-0 items-end border-b border-[#a9a9a9] pl-0.5">
              <Tab label="Layout" />
              <Tab label="Item Properties" active />
              <Tab label="Guides" />
              <Tab label="Atlas" />
            </div>
            <DockHeader title="Item Properties" />
          </aside>
        </main>

        {/* Status bar */}
        <footer className="flex h-8 shrink-0 items-center justify-end pr-0.5 text-[12px]">
          <span className="w-[127px] pt-1">x: 316.329 mm</span>
          <span className="w-[127px] pt-1">y: 117.019 mm</span>
          <span className="w-[127px] pt-1">page: 1</span>
          <div className="relative mt-0.5 h-6 w-[126px] border border-[#7a7a7a] bg-white">
            <select aria-label="Zoom level" className="h-full w-full appearance-none bg-transparent pl-[5px]">
              <option>70.1%</option>
            </select>
            <Chevron className="pointer-events-none absolute top-2 right-1 h-2 w-3 text-[#555]" />
          </div>
          <input
            type="range"
            aria-label="Zoom"
            defaultValue={0}
            className="ml-3.5 h-[25px] w-[113px] appearance-none bg-transparent [&::-webkit-slider-runnable-track]:h-1 [&::-webkit-slider-runnable-track]:border [&::-webkit-slider-runnable-track]:border-[#d6d6d6] [&::-webkit-slider-runnable-track]:bg-[#e7eaea] [&::-webkit-slider-thumb]:-mt-3 [&::-webkit-slider-thumb]:h-[25px] [&::-webkit-slider-thumb]:w-3 [&::-webkit-slider-thumb]:appearance-none [&::-webkit-slider-thumb]:bg-[#2f78d6]"
          />
          <svg viewBox="0 0 12 12" className="ml-2.5 size-3 self-end" aria-hidden="true">
            <path d="M9 1h2v2H9zM9 5h2v2H9zM5 5h2v2H5zM9 9h2v2H9zM5 9h2v2H5zM1 9h2v2H1z" fill="#bfbfbf" />
          </svg>
        </footer>

        <p className="pointer-events-none absolute right-[57px] -bottom-1.5 font-['Open_Sans',sans-serif] text-[23px] leading-8 text-[#8a8a8a]/60">
          Activate Windows
        </p>
      </div>
    </div>
  );
}
